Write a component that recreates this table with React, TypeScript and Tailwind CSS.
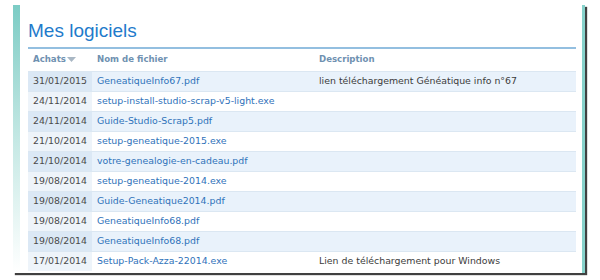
const rows = [
  { date: "31/01/2015", file: "GeneatiqueInfo67.pdf", desc: "lien téléchargement Généatique info n°67" },
  { date: "24/11/2014", file: "setup-install-studio-scrap-v5-light.exe", desc: "" },
  { date: "24/11/2014", file: "Guide-Studio-Scrap5.pdf", desc: "" },
  { date: "21/10/2014", file: "setup-geneatique-2015.exe", desc: "" },
  { date: "21/10/2014", file: "votre-genealogie-en-cadeau.pdf", desc: "" },
  { date: "19/08/2014", file: "setup-geneatique-2014.exe", desc: "" },
  { date: "19/08/2014", file: "Guide-Geneatique2014.pdf", desc: "" },
  { date: "19/08/2014", file: "GeneatiqueInfo68.pdf", desc: "" },
  { date: "19/08/2014", file: "GeneatiqueInfo68.pdf", desc: "" },
  { date: "17/01/2014", file: "Setup-Pack-Azza-22014.exe", desc: "Lien de téléchargement pour Windows" },
];

export default function App() {
  return (
    <div className="w-[600px] h-[280px] bg-white pl-[13px] pt-[5px] overflow-hidden">
      {/* framed panel */}
      <div className="w-[572px] h-[268px] flex bg-white border-r-[3px] border-[#86d2cb] shadow-[2px_2px_1px_rgba(30,30,30,0.85)]">
        <div className="w-[7px] shrink-0 bg-gradient-to-b from-[#7cccc5] via-[#c4e8e4] to-white" />
        <div className="flex-1 pl-[8px] pr-[6px] pt-[15px]">
          <h1 className="font-['Liberation_Sans',Arial,sans-serif] text-[19px] leading-[22px] text-[#1f7bcb] pb-[5px] border-b-2 border-[#93bfe0]">
            Mes logiciels
          </h1>
          <table className="w-full border-collapse font-['DejaVu_Sans',Verdana,sans-serif] text-[9.4px]">
            <thead>
              <tr className="h-[22px] text-left">
                <th className="w-[64px] pl-[5px] font-bold text-[8.6px] text-[#6f91b1]">
                  <span className="inline-flex items-center gap-[1px]">
                    Achats
                    <svg width="9" height="6" viewBox="0 0 9 6">
                      <path d="M0 0 L9 0 L4.5 5 Z" fill="#a9b7c4" />
                    </svg>
                  </span>
                </th>
                <th className="w-[221px] pl-[5px] font-bold text-[8.6px] text-[#6f91b1]">Nom de fichier</th>
                <th className="pl-[6px] font-bold text-[8.6px] text-[#6f91b1]">Description</th>
              </tr>
            </thead>
            <tbody>
              {rows.map((r, i) => {
                const odd = i % 2 === 0;
                return (
                  <tr
                    key={i}
                    className={`h-[20px] border-t border-[#dbe7f2] ${odd ? "bg-[#e9f2fb]" : "bg-white"}`}
                  >
                    <td className={`pl-[5px] text-[#4a4a4a] ${odd ? "bg-[#dbe8f5]" : "bg-[#eef4fa]"}`}>{r.date}</td>
                    <td className="pl-[5px] text-[#2f72ba]">{r.file}</td>
                    <td className="pl-[6px] text-[#3c3c3c]">{r.desc}</td>
                  </tr>
                );
              })}
            </tbody>
          </table>
        </div>
      </div>
    </div>
  );
}
